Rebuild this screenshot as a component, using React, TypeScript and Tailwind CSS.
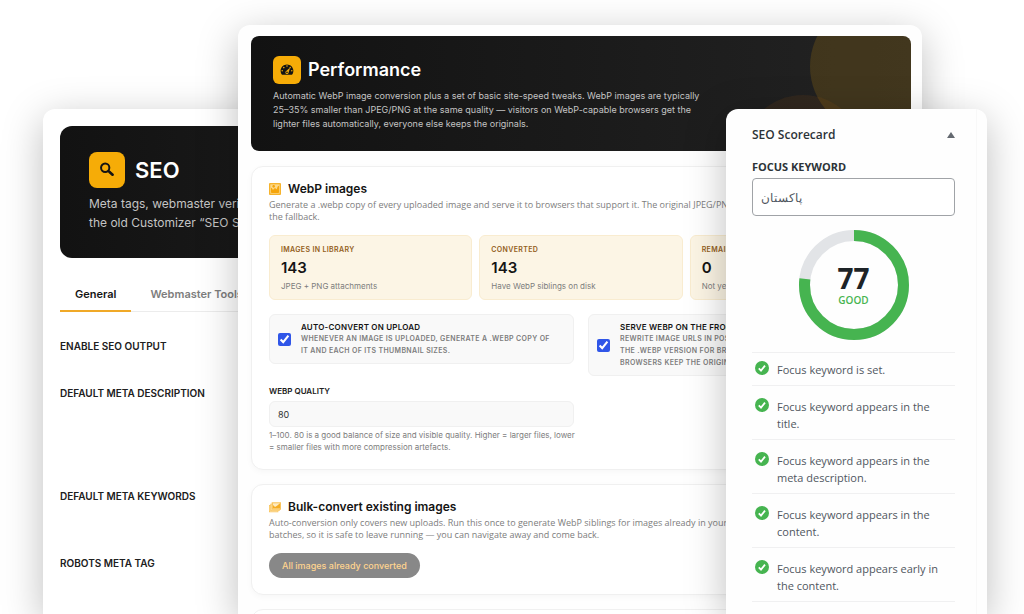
import type { ReactNode } from "react";

const STATS = [
  { label: "Images in library", value: "143", note: "JPEG + PNG attachments" },
  { label: "Converted", value: "143", note: "Have WebP siblings on disk" },
  { label: "Remaining", value: "0", note: "Not yet converted" },
];

const CHECKS = [
  "Focus keyword is set.",
  "Focus keyword appears in the title.",
  "Focus keyword appears in the meta description.",
  "Focus keyword appears in the content.",
  "Focus keyword appears early in the content.",
];

function SearchIcon() {
  return (
    <svg viewBox="0 0 20 20" className="size-[18px]" fill="none" stroke="#141414">
      <circle cx="8" cy="7.5" r="4.6" strokeWidth="2.2" />
      <path d="M11.4 10.8l1.6 1.6" strokeWidth="2" />
      <path d="M12.8 12.2l3.4 3" strokeWidth="3" strokeLinecap="round" />
    </svg>
  );
}

function DashboardIcon() {
  return (
    <svg viewBox="0 0 20 20" className="size-4" fill="#141414">
      <path d="M3.76 16h12.48c1.1-1.37 1.76-3.11 1.76-5 0-4.42-3.58-8-8-8s-8 3.58-8 8c0 1.89.66 3.63 1.76 5zM10 4c.55 0 1 .45 1 1s-.45 1-1 1-1-.45-1-1 .45-1 1-1zM6 6c.55 0 1 .45 1 1s-.45 1-1 1-1-.45-1-1 .45-1 1-1zm8 0c.55 0 1 .45 1 1s-.45 1-1 1-1-.45-1-1 .45-1 1-1zm-5.37 5.55L14 7l-2 6c0 1.1-.9 2-2 2s-2-.9-2-2c0-.57.24-1.08.63-1.45zM4 10c.55 0 1 .45 1 1s-.45 1-1 1-1-.45-1-1 .45-1 1-1zm12 0c.55 0 1 .45 1 1s-.45 1-1 1-1-.45-1-1 .45-1 1-1zm-5 3c0-.55-.45-1-1-1s-1 .45-1 1 .45 1 1 1 1-.45 1-1z" />
    </svg>
  );
}

function ImageIcon() {
  return (
    <svg viewBox="1 1 18 18" className="size-3">
      <rect x="1" y="1" width="18" height="18" rx="1.5" fill="#f6b32c" />
      <rect x="3" y="3" width="14" height="14" fill="#fdd98b" />
      <path
        d="M10 6c0-1.1-.9-2-2-2s-2 .9-2 2 .9 2 2 2 2-.9 2-2zm3 5s0-6 3-6v10c0 .55-.45 1-1 1H5c-.55 0-1-.45-1-1V8c2 0 3 4 3 4s1-3 3-3 3 2 3 2z"
        fill="#f5a50c"
      />
    </svg>
  );
}

function ImagesIcon() {
  return (
    <svg viewBox="1 1 18 18" className="size-3">
      <path d="M5 3h14v11h-2v2h-2v2H1V7h2V5h2z" fill="#f9c45c" />
      <path d="M2.5 8v8.5H14M4.5 6v8.5H16" fill="none" stroke="#fde3ab" />
      <path d="M7 4.5h10.5V12H7z" fill="#fdeac2" />
      <path d="M7 12V7l3 3 3-2 4.500-3.500V12z" fill="#f5ad24" />
    </svg>
  );
}

function CheckIcon() {
  return (
    <svg viewBox="0 0 14 14" className="size-[14px] shrink-0">
      <circle cx="7" cy="7" r="7" fill="#46b450" />
      <path d="M3.800 7.400l2.200 2.200 4-5" fill="none" stroke="#fff" strokeWidth="1.800" />
    </svg>
  );
}

function Card({ icon, title, text, children }: { icon: ReactNode; title: string; text: ReactNode; children: ReactNode }) {
  return (
    <section className="rounded-xl border border-[#f0f0f0] bg-white px-[17px] pt-3.5 pb-4 shadow-[0_2px_6px_rgba(0,0,0,0.03)]">
      <h2 className="flex items-center gap-[7px] text-xs leading-4 font-semibold text-[#141414]">
        {icon}
        {title}
      </h2>
      <p className="mt-0.5 font-['Open_Sans',sans-serif] text-[9px] leading-3 whitespace-nowrap text-[#7d7d7d]">{text}</p>
      {children}
    </section>
  );
}

function Toggle({ id, title, children }: { id: string; title: string; children: ReactNode }) {
  return (
    <label
      htmlFor={id}
      className="flex items-center gap-2.5 overflow-hidden rounded-md border border-[#f0f0f0] bg-[#f9f9f9] px-2 py-1.5 whitespace-nowrap uppercase"
    >
      <input id={id} type="checkbox" defaultChecked className="size-[13px] shrink-0 accent-[#3056e8]" />
      <span className="text-[7px] leading-3 font-semibold tracking-wider text-[#7d7d7d]">
        <span className="block text-[8px] tracking-wide text-[#141414]">{title}</span>
        {children}
      </span>
    </label>
  );
}

function SeoPanel() {
  return (
    <section className="z-0 mt-[109px] -mr-[61px] w-64 shrink-0 overflow-hidden rounded-t-xl bg-white pt-[17px] pl-[17px] whitespace-nowrap shadow-[0_10px_40px_rgba(0,0,0,0.26)]">
      <header className="h-[132px] rounded-l-xl bg-linear-to-r from-[#121212] to-[#1a1a1a] px-[29px] pt-[26px]">
        <div className="flex items-center gap-2.5">
          <span className="grid size-9 place-items-center rounded-lg bg-[#f6ac07]">
            <SearchIcon />
          </span>
          <h1 className="text-[22px] leading-9 font-semibold text-white">SEO</h1>
        </div>
        <p className="mt-1.5 text-xs leading-[19px] text-[#c4c4c4]">
          Meta tags, webmaster verification
          <br />
          the old Customizer “SEO Settings”
        </p>
      </header>

      <nav className="mt-5 flex border-b border-[#ececec] text-[11px] leading-8 font-semibold">
        <a href="#general" className="-mb-px border-b-2 border-[#f0a928] px-[15px] text-[#141414]">
          General
        </a>
        <a href="#webmaster" className="ml-1 -mb-px px-[15px] text-[#7d7d7d]">
          Webmaster Tools
        </a>
      </nav>

      <div className="pt-[26px] text-[10px] leading-4 font-semibold text-[#202020] uppercase">
        <p className="mb-[31px]">Enable SEO output</p>
        <p className="mb-[87px]">Default meta description</p>
        <p className="mb-[51px]">Default meta keywords</p>
        <p>Robots meta tag</p>
      </div>
    </section>
  );
}

function PerformancePanel() {
  return (
    <main className="z-10 mt-[25px] min-w-0 flex-1 overflow-hidden rounded-t-xl bg-[#fefefe] px-[13px] pt-[11px] pr-[11px] shadow-[0_10px_40px_rgba(0,0,0,0.26)]">
      <header className="relative h-[115px] overflow-hidden rounded-lg bg-linear-to-r from-[#121212] to-[#232323] px-[22px] pt-5">
        <span className="absolute -top-9 -right-8 size-[133px] rounded-full bg-[#f6ac07]/15" />
        <span className="absolute top-[59px] right-[47px] size-[122px] rounded-full bg-[#f07d07]/8" />
        <div className="flex items-center gap-[7px]">
          <span className="grid size-7 place-items-center rounded-md bg-[#f6ac07]">
            <DashboardIcon />
          </span>
          <h1 className="text-lg leading-7 font-semibold text-white">Performance</h1>
        </div>
        <p className="mt-[5px] text-[9px] leading-[14px] whitespace-nowrap text-[#c4c4c4]">
          Automatic WebP image conversion plus a set of basic site-speed tweaks. WebP images are typically
          <br />
          25–35% smaller than JPEG/PNG at the same quality — visitors on WebP-capable browsers get the
          <br />
          lighter files automatically, everyone else keeps the originals.
        </p>
      </header>

      <div className="mt-[15px] flex flex-col gap-3.5">
        <Card
          icon={<ImageIcon />}
          title="WebP images"
          text={
            <>
              Generate a .webp copy of every uploaded image and serve it to browsers that support it. The original JPEG/PNG
              <br />
              the fallback.
            </>
          }
        >
          <dl className="mt-3 grid grid-cols-3 gap-[7px]">
            {STATS.map((s) => (
              <div key={s.label} className="rounded-md border border-[#f9ecd0] bg-[#fcf5e5] px-[11px] pt-2 pb-[7px]">
                <dt className="text-[7px] leading-3 font-semibold tracking-wider text-[#93601c] uppercase">{s.label}</dt>
                <dd className="text-[15px] leading-6 font-semibold text-[#141414]">{s.value}</dd>
                <dd className="text-[8px] leading-3 text-[#7d7d7d]">{s.note}</dd>
              </div>
            ))}
          </dl>

          <div className="mt-3.5 grid grid-cols-2 items-start gap-3.5">
            <div>
              <Toggle id="auto-convert" title="Auto-convert on upload">
                Whenever an image is uploaded, generate a .webp copy of
                <br />
                it and each of its thumbnail sizes.
              </Toggle>
              <label htmlFor="quality" className="mt-[19px] block text-[8px] leading-4 font-semibold text-[#202020] uppercase">
                WebP quality
              </label>
              <input
                id="quality"
                defaultValue="80"
                className="mt-0.5 block h-[26px] w-full rounded-md border border-[#f0f0f0] bg-[#f9f9f9] px-2 text-[9px] text-[#333]"
              />
              <p className="mt-0.5 text-[8px] leading-3 whitespace-nowrap text-[#7d7d7d]">
                1–100. 80 is a good balance of size and visible quality. Higher = larger files, lower
                <br />= smaller files with more compression artefacts.
              </p>
            </div>
            <Toggle id="serve-webp" title="Serve WebP on the front end">
              Rewrite image URLs in post content to
              <br />
              the .webp version for browsers, other
              <br />
              browsers keep the original files.
            </Toggle>
          </div>
        </Card>

        <Card
          icon={<ImagesIcon />}
          title="Bulk-convert existing images"
          text={
            <>
              Auto-conversion only covers new uploads. Run this once to generate WebP siblings for images already in your Media
              <br />
              batches, so it is safe to leave running — you can navigate away and come back.
            </>
          }
        >
          <button disabled className="mt-3 block h-[25px] rounded-full bg-[#888] px-[13px] text-[9px] font-medium text-[#ffd48f]">
            All images already converted
          </button>
        </Card>

        <section className="h-16 rounded-xl border border-[#f0f0f0] bg-white" />
      </div>
    </main>
  );
}

function Scorecard({ score }: { score: number }) {
  return (
    <aside className="z-20 mt-[109px] mr-[37px] -ml-[196px] w-[261px] shrink-0 overflow-hidden rounded-t-xl bg-[#fefefe] pr-2.5 font-['Open_Sans','Noto_Sans',sans-serif] shadow-[0_10px_40px_rgba(0,0,0,0.26)]">
      <div className="h-full border-r border-[#f8f8f8] pt-[17px] pr-[21px] pl-[26px]">
        <header className="flex items-center justify-between text-[#2c3338]">
          <h2 className="text-xs leading-[18px] font-semibold">SEO Scorecard</h2>
          <button aria-label="Collapse" className="-mr-1 px-1">
            <svg viewBox="0 0 8 6" className="h-1.5 w-2" fill="#646970">
              <path d="M4 0l4 6H0z" />
            </svg>
          </button>
        </header>

        <label htmlFor="keyword" className="mt-[15px] block text-[11px] leading-4 font-bold text-[#2c3338] uppercase">
          Focus keyword
        </label>
        <input
          id="keyword"
          defaultValue="پاکستان"
          className="mt-[3px] block h-[38px] w-full rounded border border-[#a0a3a7] bg-white px-2 text-xs text-[#50575e]"
        />

        <div className="mx-auto mt-3.5 grid size-[110px] place-items-center">
          <svg viewBox="0 0 110 110" className="col-start-1 row-start-1 size-full -rotate-90" fill="none" strokeWidth="11">
            <circle cx="55" cy="55" r="49.500" stroke="#e2e4e7" />
            <circle cx="55" cy="55" r="49.500" stroke="#46b450" pathLength={100} strokeDasharray={`${score} 100`} />
          </svg>
          <p className="col-start-1 row-start-1 text-center">
            <span className="block text-[28px] leading-[30px] font-bold text-[#1d2327]">{score}</span>
            <span className="block text-[10px] leading-[14px] font-semibold text-[#46b450]">GOOD</span>
          </p>
        </div>

        <ul className="mt-3 border-t border-[#f0f0f1] text-[11px] leading-[17px] text-[#50575e]">
          {CHECKS.map((c) => (
            <li key={c} className="flex gap-2 border-b border-[#f0f0f1] pt-3 pb-[7px] pl-[3px] first:pt-2">
              <CheckIcon />
              <span>{c}</span>
            </li>
          ))}
        </ul>
      </div>
    </aside>
  );
}

export default function App() {
  return (
    <div className="flex h-screen overflow-hidden bg-white pl-[43px] font-['Inter',sans-serif]">
      <SeoPanel />
      <PerformancePanel />
      <Scorecard score={77} />
    </div>
  );
}
